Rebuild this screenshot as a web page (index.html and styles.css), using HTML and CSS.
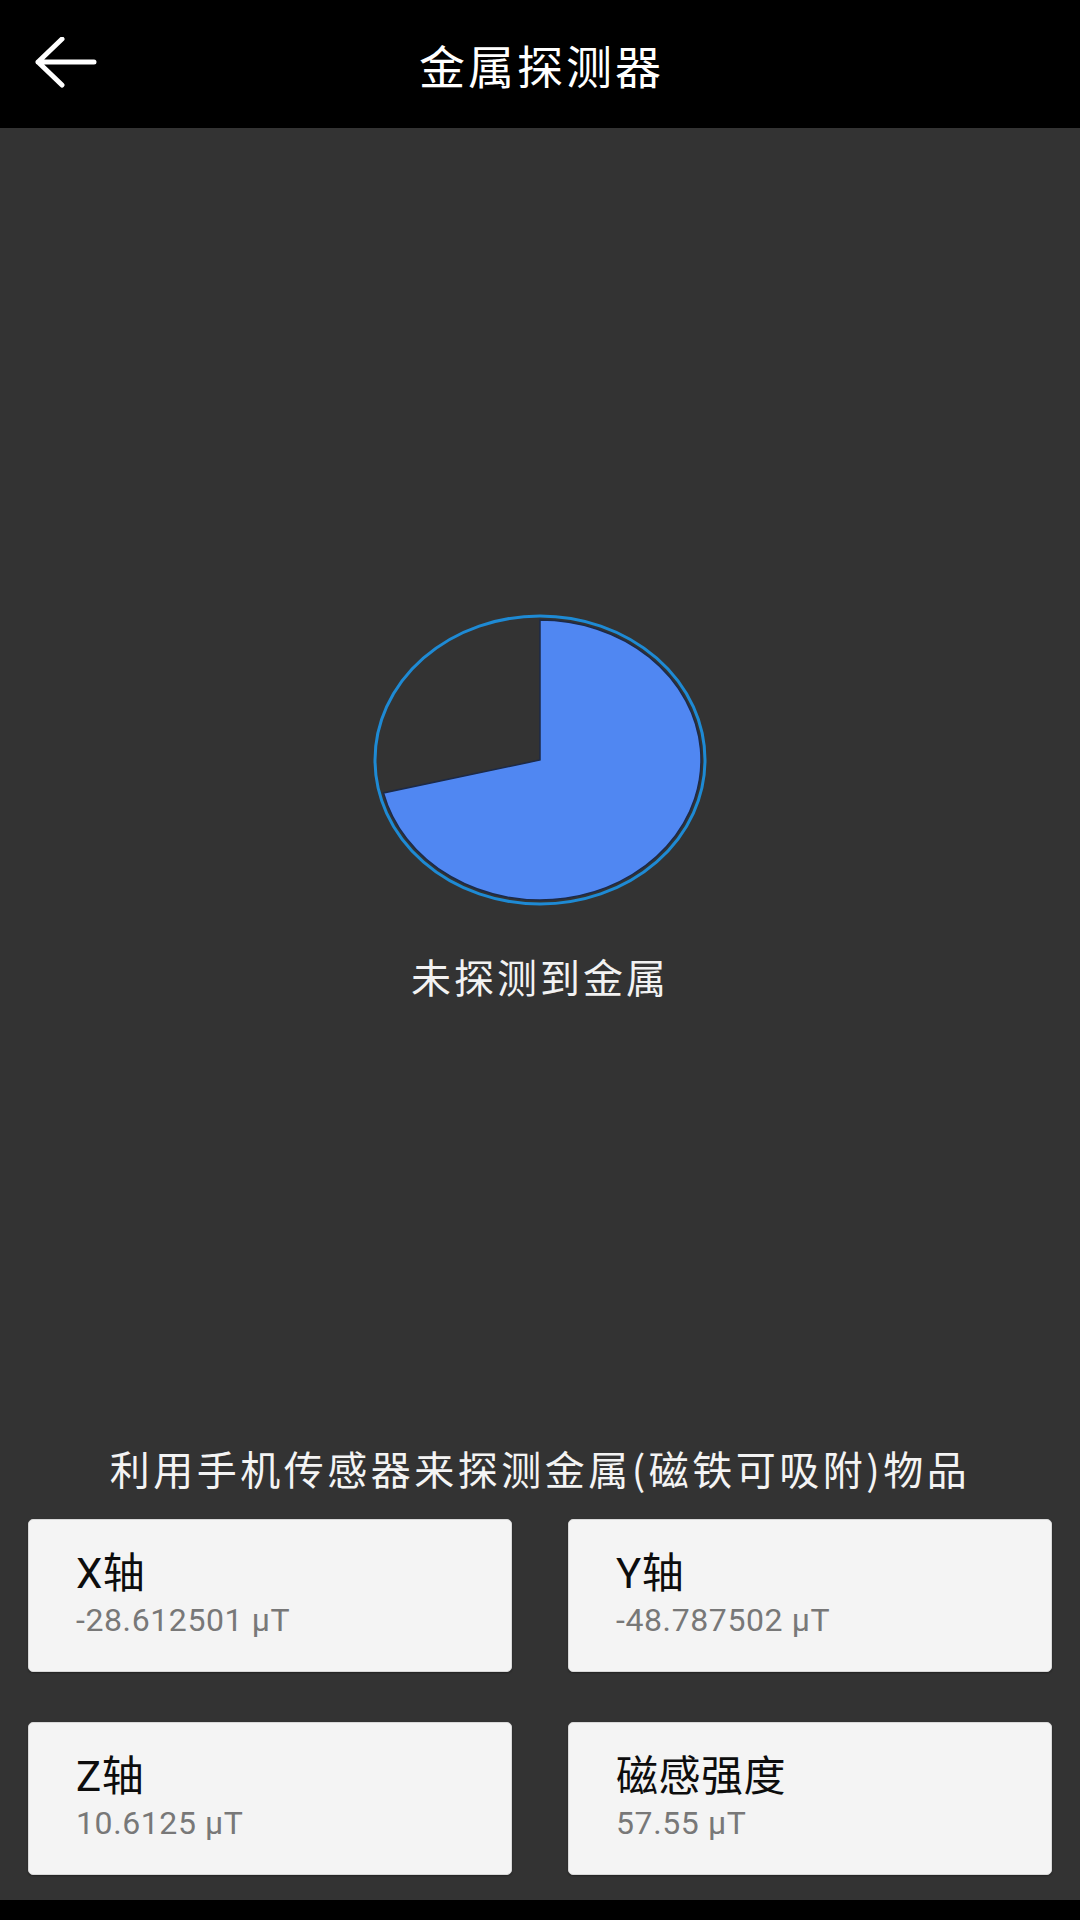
FILE: index.html
```html
<!DOCTYPE html>
<html lang="zh-CN">
<head>
<meta charset="utf-8">
<title>金属探测器</title>
<link rel="stylesheet" href="styles.css">
</head>
<body>
<div class="app">
  <header class="topbar">
    <svg class="back" width="64" height="56" viewBox="0 0 64 56">
      <path d="M4 25 H60 M28 2 L4 25 L28 48" fill="none" stroke="#fff" stroke-width="5" stroke-linecap="round" stroke-linejoin="round"/>
    </svg>
    <h1 class="title">金属探测器</h1>
    <span class="spacer"></span>
  </header>
  <main class="main">
    <section class="detector">
      <svg class="pie" width="340" height="300" viewBox="0 0 340 300">
        <ellipse cx="170" cy="150" rx="165" ry="144" fill="none" stroke="#1e8ad4" stroke-width="3"/>
        <path d="M170 150 L170 10 A161 140 0 1 1 13.5 182.9 Z" fill="#5087f2" stroke="#1c2a48" stroke-width="1.5"/>
      </svg>
      <p class="status">未探测到金属</p>
    </section>
    <section class="readings">
      <p class="desc">利用手机传感器来探测金属(磁铁可吸附)物品</p>
      <div class="grid">
        <div class="card"><div class="label">X轴</div><div class="value">-28.612501 μT</div></div>
        <div class="card"><div class="label">Y轴</div><div class="value">-48.787502 μT</div></div>
        <div class="card"><div class="label">Z轴</div><div class="value">10.6125 μT</div></div>
        <div class="card"><div class="label">磁感强度</div><div class="value">57.55 μT</div></div>
      </div>
    </section>
  </main>
  <div class="navbar"></div>
</div>
</body>
</html>
```
FILE: styles.css
```css
* { box-sizing: border-box; }
html, body { margin: 0; padding: 0; }
body {
  width: 1080px;
  height: 1920px;
  background: #000;
  font-family: "Noto Sans CJK SC", "Noto Sans", Roboto, sans-serif;
  overflow: hidden;
}
.app {
  display: flex;
  flex-direction: column;
  height: 1920px;
}
.topbar {
  height: 128px;
  flex: none;
  background: #000;
  display: grid;
  grid-template-columns: 1fr auto 1fr;
  align-items: center;
  padding: 0 34px;
}
.back { display: block; margin-top: 2px; }
.title {
  margin: 0;
  color: #fff;
  font-size: 46px;
  font-weight: 400;
  letter-spacing: 3px;
  line-height: 1;
  padding-left: 3px;
}
.main {
  flex: 1;
  background: #333333;
  display: flex;
  flex-direction: column;
}
.detector {
  display: flex;
  flex-direction: column;
  align-items: center;
  padding-top: 482px;
}
.pie { display: block; }
.status {
  margin: 42px 0 0;
  color: #f2f2f2;
  font-size: 40px;
  line-height: 48px;
  letter-spacing: 3px;
}
.readings {
  margin-top: auto;
  padding: 0 28px 25px;
}
.desc {
  margin: 0 0 23px;
  text-align: center;
  color: #f4f4f4;
  font-size: 40px;
  line-height: 56px;
  letter-spacing: 3.5px;
}
.grid {
  display: grid;
  grid-template-columns: 1fr 1fr;
  column-gap: 56px;
  row-gap: 50px;
}
.card {
  height: 153px;
  background: #f4f4f4;
  border: 1px solid #d8d8d8;
  border-radius: 5px;
  box-shadow: 0 1px 2px rgba(0,0,0,0.35);
  padding-left: 47px;
  display: flex;
  flex-direction: column;
  justify-content: center;
}
.label {
  color: #0d0d0d;
  font-family: Roboto, "Noto Sans CJK SC", sans-serif;
  font-size: 42px;
  line-height: 46px;
  letter-spacing: 0.5px;
}
.value {
  color: #787878;
  font-family: Roboto, "Noto Sans CJK SC", sans-serif;
  font-size: 32px;
  line-height: 42px;
  letter-spacing: 0.6px;
  padding-top: 2px;
}
.navbar {
  height: 20px;
  flex: none;
  background: #000;
}
```
